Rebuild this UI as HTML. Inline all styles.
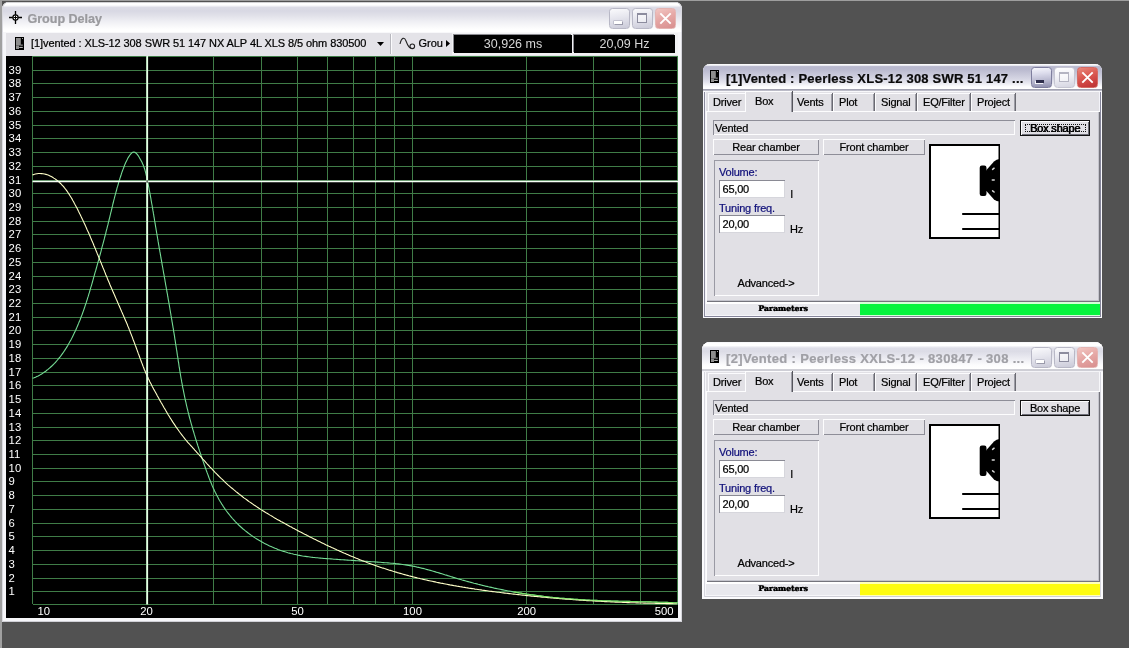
<!DOCTYPE html>
<html lang="en"><head><meta charset="utf-8">
<title>Group Delay</title>
<style>
html,body{margin:0;padding:0}
body{width:1129px;height:648px;overflow:hidden;background:#525252;position:relative;
 font-family:"Liberation Sans",Arial,sans-serif;font-size:11px;color:#000}
.abs,.plot,div,span,svg{position:absolute}
.win{background:#e2e1e6;border-radius:7px 7px 0 0}
.t{white-space:nowrap;line-height:1;-webkit-text-stroke:0.22px currentColor}
</style></head><body><div id="root" style="left:0;top:0;width:1129px;height:648px;will-change:transform">
<div style="left:0;top:0;width:1129px;height:1.3px;background:#9e9e9e"></div><div style="left:0;top:0;width:1.5px;height:648px;background:#a0a0a0"></div>
<div class="win" style="left:2px;top:2px;width:680px;height:620px;background:#f6f6f9;box-shadow:inset 1px 0 0 #dcdce2, inset -1px 0 0 #d4d4da, inset 0 -1px 0 #d0d0d6"></div>
<div style="left:2px;top:2px;width:680px;height:30px;border-radius:7px 7px 0 0;background:linear-gradient(#b4b4b8 0,#ffffff 1.2px,#ffffff 3px,#dcdce6 5.5px,#d8d8e3 9px,#e2e2ea 14px,#eeeef3 19px,#f8f8fa 24px,#ffffff 28px);box-shadow:inset 1px 0 0 #d8d8de, inset -1px 0 0 #d8d8de"></div>
<svg style="left:8px;top:10px" width="16" height="16" viewBox="0 0 16 16"><path d="M7.5,1 V14 M1,7.5 H14" stroke="#000" stroke-width="1.3" fill="none"/><circle cx="7.5" cy="7.5" r="2.6" stroke="#000" stroke-width="1.2" fill="#fff"/><path d="M7.5,5.5 V9.5 M5.5,7.5 H9.5" stroke="#000" stroke-width="1" fill="none"/></svg>
<div class="t" style="left:27.5px;top:13.4px;font-size:12.6px;font-weight:bold;color:#9a9a9e;letter-spacing:-0.05px">Group Delay</div>
<div style="left:609px;top:8px;width:19px;height:19px;border:1px solid #b8b8c6;border-radius:3.5px;background:linear-gradient(170deg,#fafafc 0,#e6e6ee 45%,#cacad8 100%)"><div style="left:3.5px;top:11.5px;width:8px;height:3px;background:#fff;box-shadow:1px 1px 0 #9a9aaa, 0 0 0 0.5px #a6a6b6"></div></div>
<div style="left:632px;top:8px;width:19px;height:19px;border:1px solid #b8b8c6;border-radius:3.5px;background:linear-gradient(170deg,#fafafc 0,#e6e6ee 45%,#cacad8 100%)"><div style="left:4px;top:4px;width:8px;height:7px;border:1px solid #8c8c9e;border-top-width:2px;background:rgba(255,255,255,.5)"></div></div>
<div style="left:655px;top:8px;width:19px;height:19px;border:1px solid #e4b4b2;border-radius:3.5px;background:linear-gradient(160deg,#f2c6c2 0,#e6a8a6 45%,#d88e8e 100%)"><svg style="left:3px;top:3px" width="13" height="13" viewBox="0 0 13 13"><path d="M1.3,1.3 L11.7,11.7 M11.7,1.3 L1.3,11.7" stroke="#fff" stroke-width="1.9" fill="none"/></svg></div>
<div style="left:6px;top:32px;width:672px;height:24px;background:#e4e3e8;box-shadow:inset 0 1px 0 #f8f8fa"></div>
<svg style="left:15px;top:37px" width="9" height="13" viewBox="0 0 9 13"><rect x="0" y="0" width="9" height="13" fill="#000"/><rect x="1" y="1" width="4.8" height="7.6" fill="#8e8e8e"/><rect x="1" y="8.6" width="3" height="3.4" fill="#8e8e8e"/><rect x="5.8" y="7.7" width="2" height="0.8" fill="#d8d8d8"/><rect x="4.2" y="9.9" width="3.6" height="0.9" fill="#e4e4e4"/><rect x="7" y="1" width="0.9" height="0.9" fill="#d0d0d0"/></svg>
<div class="t" style="left:31px;top:38px;font-size:11px;letter-spacing:-0.085px">[1]vented : XLS-12 308 SWR 51 147 NX ALP 4L XLS 8/5 ohm 830500</div>
<svg style="left:377px;top:42px" width="7" height="4"><path d="M0,0 H7 L3.5,4 Z" fill="#000"/></svg>
<div style="left:390px;top:34px;width:1px;height:20px;background:#b8b8be"></div>
<div style="left:391px;top:34px;width:1px;height:20px;background:#fbfbfd"></div>
<svg style="left:399px;top:36px" width="19" height="16" viewBox="0 0 19 16"><path d="M1,8 C2.5,1 5.5,1 7,5 C8.5,9 9.5,12 12,12" stroke="#222" stroke-width="1.1" fill="none"/><circle cx="13.3" cy="10.3" r="2.3" stroke="#222" stroke-width="1.1" fill="none"/></svg>
<div class="t" style="left:418.5px;top:38px;font-size:11px">Grou</div>
<svg style="left:446px;top:40px" width="4" height="7"><path d="M0,0 V7 L4,3.5 Z" fill="#000"/></svg>
<div style="left:452px;top:33px;width:226px;height:22px;background:#f2f2f4"></div>
<div style="left:454px;top:35px;width:118px;height:18px;background:#000;box-shadow:-1px -1px 0 #8a8a90"></div>
<div style="left:574px;top:35px;width:101px;height:18px;background:#000;box-shadow:-1px -1px 0 #8a8a90"></div>
<div class="t" style="left:454px;top:38.3px;width:118px;text-align:center;font-size:12.5px;color:#d6d6d6;-webkit-text-stroke:0">30,926 ms</div>
<div class="t" style="left:574px;top:38.3px;width:101px;text-align:center;font-size:12.5px;color:#d6d6d6;-webkit-text-stroke:0">20,09 Hz</div>
<svg class="plot" style="left:6px;top:56px" width="672" height="562" viewBox="6 56 672 562">
<rect x="6" y="56" width="672" height="562" fill="#000"/>
<path d="M32.5,604.5 H678 M32.5,591.5 H678 M32.5,578.5 H678 M32.5,564.5 H678 M32.5,550.5 H678 M32.5,536.5 H678 M32.5,523.5 H678 M32.5,509.5 H678 M32.5,495.5 H678 M32.5,481.5 H678 M32.5,468.5 H678 M32.5,454.5 H678 M32.5,440.5 H678 M32.5,427.5 H678 M32.5,413.5 H678 M32.5,399.5 H678 M32.5,385.5 H678 M32.5,372.5 H678 M32.5,358.5 H678 M32.5,344.5 H678 M32.5,330.5 H678 M32.5,317.5 H678 M32.5,303.5 H678 M32.5,289.5 H678 M32.5,276.5 H678 M32.5,262.5 H678 M32.5,248.5 H678 M32.5,234.5 H678 M32.5,221.5 H678 M32.5,207.5 H678 M32.5,193.5 H678 M32.5,180.5 H678 M32.5,166.5 H678 M32.5,152.5 H678 M32.5,138.5 H678 M32.5,125.5 H678 M32.5,111.5 H678 M32.5,97.5 H678 M32.5,83.5 H678 M32.5,70.5 H678 M32.5,56.5 H678 M32.5,56 V604.4 M146.5,56 V604.4 M213.5,56 V604.4 M261.5,56 V604.4 M297.5,56 V604.4 M327.5,56 V604.4 M353.5,56 V604.4 M375.5,56 V604.4 M394.5,56 V604.4 M412.5,56 V604.4 M526.5,56 V604.4 M593.5,56 V604.4 M640.5,56 V604.4 M677.5,56 V604.4" stroke="#3f7c47" stroke-width="1" fill="none" shape-rendering="crispEdges"/>
<path d="M32.5,378.3 L34.1,377.8 L35.5,377.2 L36.8,376.5 L38.2,375.9 L39.5,375.2 L40.8,374.4 L42.0,373.7 L43.3,372.9 L44.5,372.0 L45.7,371.2 L46.8,370.3 L48.0,369.4 L49.1,368.4 L50.2,367.5 L51.3,366.5 L52.4,365.5 L53.5,364.4 L54.5,363.4 L55.5,362.3 L56.5,361.2 L57.5,360.0 L58.4,358.9 L59.4,357.7 L60.3,356.6 L61.2,355.4 L62.1,354.1 L63.0,352.9 L63.8,351.7 L64.7,350.4 L65.5,349.1 L66.3,347.9 L67.1,346.6 L67.9,345.3 L68.6,343.9 L69.4,342.6 L70.1,341.3 L70.9,339.9 L71.6,338.6 L72.3,337.2 L72.9,335.9 L73.6,334.5 L74.3,333.1 L74.9,331.7 L75.6,330.4 L76.2,329.0 L76.8,327.6 L77.4,326.2 L78.0,324.8 L78.6,323.4 L79.1,322.0 L79.7,320.7 L80.3,319.3 L80.8,317.9 L81.3,316.5 L81.9,315.1 L82.4,313.7 L82.9,312.3 L83.4,310.9 L83.9,309.5 L84.4,308.0 L84.9,306.6 L85.3,305.2 L85.8,303.8 L86.3,302.4 L86.7,301.0 L87.2,299.6 L87.6,298.2 L88.1,296.7 L88.5,295.3 L88.9,293.9 L89.4,292.5 L89.8,291.0 L90.2,289.6 L90.6,288.2 L91.0,286.8 L91.5,285.3 L91.9,283.9 L92.3,282.5 L92.7,281.0 L93.1,279.6 L93.5,278.1 L93.9,276.7 L94.3,275.3 L94.7,273.8 L95.1,272.4 L95.6,270.9 L96.0,269.5 L96.4,268.0 L96.8,266.6 L97.2,265.1 L97.6,263.7 L98.0,262.2 L98.4,260.8 L98.8,259.3 L99.2,257.9 L99.6,256.4 L100.0,255.0 L100.4,253.5 L100.8,252.1 L101.2,250.6 L101.5,249.2 L101.9,247.7 L102.3,246.2 L102.7,244.8 L103.1,243.3 L103.5,241.9 L103.9,240.4 L104.3,238.9 L104.6,237.5 L105.0,236.0 L105.4,234.6 L105.8,233.1 L106.1,231.6 L106.5,230.2 L106.9,228.7 L107.2,227.3 L107.6,225.8 L108.0,224.4 L108.3,222.9 L108.7,221.4 L109.1,220.0 L109.4,218.5 L109.8,217.1 L110.1,215.6 L110.5,214.2 L110.8,212.7 L111.2,211.3 L111.5,209.8 L111.9,208.3 L112.2,206.9 L112.6,205.4 L112.9,204.0 L113.3,202.5 L113.6,201.1 L114.0,199.7 L114.4,198.2 L114.7,196.8 L115.1,195.3 L115.5,193.9 L115.9,192.4 L116.3,191.0 L116.7,189.6 L117.0,188.1 L117.5,186.7 L117.9,185.3 L118.3,183.8 L118.7,182.4 L119.1,181.0 L119.6,179.6 L120.0,178.1 L120.5,176.7 L121.0,175.3 L121.4,173.9 L121.9,172.4 L122.4,171.0 L122.9,169.6 L123.5,168.2 L124.0,166.8 L124.5,165.4 L125.1,164.0 L125.7,162.6 L126.4,161.2 L127.1,159.8 L127.8,158.3 L128.7,156.9 L129.6,155.5 L130.6,154.2 L131.6,153.1 L132.7,152.3 L133.8,152.0 L134.9,152.2 L135.9,153.0 L137.0,154.1 L138.0,155.4 L138.9,156.8 L139.7,158.2 L140.5,159.6 L141.3,160.9 L142.0,162.3 L142.6,163.7 L143.2,165.0 L143.7,166.4 L144.2,167.8 L144.7,169.2 L145.1,170.7 L145.5,172.1 L145.9,173.6 L146.2,175.0 L146.6,176.5 L146.9,178.0 L147.2,179.4 L147.5,180.9 L147.8,182.4 L148.1,183.9 L148.4,185.3 L148.7,186.8 L149.0,188.3 L149.2,189.8 L149.5,191.2 L149.8,192.7 L150.1,194.2 L150.3,195.7 L150.6,197.1 L150.9,198.6 L151.1,200.1 L151.4,201.6 L151.6,203.0 L151.9,204.5 L152.2,206.0 L152.4,207.5 L152.7,208.9 L152.9,210.4 L153.2,211.9 L153.4,213.4 L153.7,214.8 L153.9,216.3 L154.2,217.8 L154.4,219.3 L154.6,220.7 L154.9,222.2 L155.1,223.7 L155.4,225.2 L155.6,226.6 L155.9,228.1 L156.1,229.6 L156.4,231.1 L156.6,232.5 L156.9,234.0 L157.1,235.5 L157.4,237.0 L157.6,238.4 L157.9,239.9 L158.1,241.4 L158.4,242.9 L158.6,244.3 L158.9,245.8 L159.1,247.3 L159.4,248.8 L159.7,250.3 L159.9,251.7 L160.2,253.2 L160.4,254.7 L160.7,256.2 L160.9,257.7 L161.2,259.1 L161.5,260.6 L161.7,262.1 L162.0,263.6 L162.2,265.1 L162.5,266.5 L162.8,268.0 L163.0,269.5 L163.3,271.0 L163.5,272.5 L163.8,273.9 L164.1,275.4 L164.3,276.9 L164.6,278.4 L164.9,279.9 L165.1,281.3 L165.4,282.8 L165.6,284.3 L165.9,285.8 L166.2,287.3 L166.4,288.7 L166.7,290.2 L166.9,291.7 L167.2,293.2 L167.5,294.7 L167.7,296.2 L168.0,297.6 L168.2,299.1 L168.5,300.6 L168.8,302.1 L169.0,303.6 L169.3,305.0 L169.5,306.5 L169.8,308.0 L170.0,309.5 L170.3,311.0 L170.5,312.5 L170.8,313.9 L171.0,315.4 L171.3,316.9 L171.5,318.4 L171.8,319.9 L172.0,321.3 L172.3,322.8 L172.5,324.3 L172.8,325.8 L173.0,327.3 L173.3,328.7 L173.5,330.2 L173.7,331.7 L174.0,333.2 L174.2,334.7 L174.5,336.1 L174.7,337.6 L174.9,339.1 L175.2,340.6 L175.4,342.1 L175.6,343.5 L175.8,345.0 L176.1,346.5 L176.3,348.0 L176.5,349.4 L176.8,350.9 L177.0,352.4 L177.2,353.9 L177.4,355.4 L177.7,356.8 L177.9,358.3 L178.1,359.8 L178.3,361.3 L178.6,362.7 L178.8,364.2 L179.0,365.7 L179.2,367.2 L179.5,368.6 L179.7,370.1 L180.0,371.6 L180.2,373.1 L180.4,374.5 L180.7,376.0 L180.9,377.5 L181.2,379.0 L181.5,380.4 L181.7,381.9 L182.0,383.4 L182.3,384.8 L182.5,386.3 L182.8,387.8 L183.1,389.2 L183.4,390.7 L183.7,392.2 L184.0,393.6 L184.3,395.1 L184.6,396.6 L184.9,398.0 L185.2,399.5 L185.5,401.0 L185.9,402.4 L186.2,403.9 L186.5,405.3 L186.9,406.8 L187.2,408.3 L187.6,409.7 L187.9,411.2 L188.3,412.6 L188.7,414.1 L189.0,415.5 L189.4,417.0 L189.8,418.5 L190.2,419.9 L190.6,421.4 L191.0,422.8 L191.4,424.3 L191.8,425.7 L192.2,427.2 L192.6,428.6 L193.0,430.1 L193.5,431.5 L193.9,432.9 L194.3,434.4 L194.8,435.8 L195.2,437.3 L195.6,438.7 L196.1,440.2 L196.5,441.6 L197.0,443.0 L197.5,444.5 L197.9,445.9 L198.4,447.3 L198.9,448.8 L199.3,450.2 L199.8,451.6 L200.3,453.1 L200.8,454.5 L201.2,455.9 L201.7,457.3 L202.2,458.8 L202.7,460.2 L203.2,461.6 L203.7,463.0 L204.2,464.5 L204.7,465.9 L205.2,467.3 L205.7,468.7 L206.2,470.1 L206.7,471.5 L207.2,472.9 L207.8,474.4 L208.3,475.8 L208.8,477.2 L209.3,478.6 L209.9,480.0 L210.4,481.3 L211.0,482.7 L211.6,484.1 L212.1,485.5 L212.7,486.9 L213.3,488.2 L214.0,489.6 L214.6,491.0 L215.2,492.3 L215.9,493.6 L216.6,495.0 L217.3,496.3 L218.0,497.6 L218.7,498.9 L219.4,500.2 L220.2,501.5 L221.0,502.8 L221.8,504.1 L222.6,505.3 L223.4,506.6 L224.2,507.8 L225.1,509.1 L225.9,510.3 L226.8,511.5 L227.7,512.7 L228.7,513.9 L229.6,515.0 L230.5,516.2 L231.5,517.3 L232.5,518.5 L233.5,519.6 L234.5,520.7 L235.5,521.8 L236.6,522.9 L237.6,523.9 L238.7,525.0 L239.8,526.0 L240.9,527.0 L242.0,528.0 L243.1,529.0 L244.3,529.9 L245.4,530.9 L246.6,531.8 L247.8,532.7 L249.0,533.6 L250.2,534.5 L251.4,535.4 L252.6,536.2 L253.9,537.1 L255.1,537.9 L256.4,538.7 L257.7,539.5 L259.0,540.3 L260.3,541.0 L261.6,541.8 L262.9,542.5 L264.2,543.2 L265.6,543.9 L266.9,544.6 L268.2,545.2 L269.6,545.9 L271.0,546.5 L272.3,547.1 L273.7,547.7 L275.1,548.3 L276.5,548.8 L277.9,549.4 L279.3,549.9 L280.7,550.4 L282.2,550.9 L283.6,551.4 L285.0,551.8 L286.5,552.2 L287.9,552.7 L289.4,553.1 L290.8,553.5 L292.3,553.8 L293.7,554.2 L295.2,554.5 L296.6,554.8 L298.1,555.2 L299.6,555.4 L301.1,555.7 L302.5,556.0 L304.0,556.2 L305.5,556.4 L307.0,556.6 L308.5,556.8 L309.9,557.0 L311.4,557.2 L312.9,557.4 L314.4,557.5 L315.9,557.7 L317.4,557.8 L318.9,558.0 L320.4,558.1 L321.9,558.2 L323.4,558.4 L324.9,558.5 L326.4,558.6 L327.9,558.7 L329.4,558.8 L330.9,558.9 L332.4,559.0 L333.9,559.2 L335.4,559.3 L337.0,559.4 L338.5,559.5 L340.0,559.6 L341.5,559.7 L343.0,559.8 L344.5,559.9 L346.0,560.0 L347.5,560.1 L349.0,560.2 L350.5,560.3 L352.0,560.4 L353.6,560.5 L355.1,560.6 L356.6,560.7 L358.1,560.8 L359.6,560.9 L361.1,561.0 L362.6,561.1 L364.1,561.2 L365.6,561.3 L367.1,561.4 L368.6,561.5 L370.1,561.6 L371.6,561.7 L373.1,561.8 L374.6,561.9 L376.1,562.0 L377.5,562.1 L379.0,562.2 L380.5,562.3 L382.0,562.5 L383.5,562.6 L385.0,562.7 L386.4,562.8 L387.9,562.9 L389.4,563.0 L390.9,563.2 L392.3,563.3 L393.8,563.4 L395.3,563.6 L396.7,563.8 L398.2,563.9 L399.7,564.1 L401.1,564.3 L402.6,564.5 L404.1,564.7 L405.5,564.9 L407.0,565.1 L408.5,565.4 L409.9,565.6 L411.4,565.9 L412.8,566.2 L414.3,566.4 L415.7,566.7 L417.2,567.1 L418.6,567.4 L420.1,567.7 L421.6,568.1 L423.0,568.4 L424.5,568.8 L425.9,569.2 L427.4,569.6 L428.8,570.0 L430.3,570.4 L431.7,570.8 L433.2,571.2 L434.6,571.6 L436.1,572.1 L437.5,572.5 L439.0,572.9 L440.4,573.4 L441.9,573.8 L443.3,574.2 L444.8,574.7 L446.2,575.1 L447.7,575.6 L449.1,576.0 L450.6,576.5 L452.0,576.9 L453.5,577.4 L454.9,577.8 L456.4,578.2 L457.8,578.7 L459.3,579.1 L460.7,579.5 L462.2,580.0 L463.6,580.4 L465.1,580.8 L466.6,581.2 L468.0,581.6 L469.5,582.0 L470.9,582.4 L472.4,582.8 L473.8,583.2 L475.3,583.5 L476.8,583.9 L478.2,584.3 L479.7,584.6 L481.1,585.0 L482.6,585.4 L484.1,585.7 L485.5,586.1 L487.0,586.4 L488.5,586.8 L489.9,587.1 L491.4,587.4 L492.9,587.7 L494.3,588.1 L495.8,588.4 L497.3,588.7 L498.7,589.0 L500.2,589.3 L501.7,589.6 L503.1,589.9 L504.6,590.2 L506.1,590.5 L507.6,590.8 L509.0,591.0 L510.5,591.3 L512.0,591.6 L513.4,591.9 L514.9,592.1 L516.4,592.4 L517.9,592.6 L519.3,592.9 L520.8,593.1 L522.3,593.4 L523.8,593.6 L525.3,593.8 L526.7,594.1 L528.2,594.3 L529.7,594.5 L531.2,594.7 L532.6,594.9 L534.1,595.1 L535.6,595.3 L537.1,595.5 L538.6,595.7 L540.1,595.9 L541.5,596.1 L543.0,596.3 L544.5,596.5 L546.0,596.6 L547.5,596.8 L549.0,597.0 L550.4,597.2 L551.9,597.3 L553.4,597.5 L554.9,597.6 L556.4,597.8 L557.9,597.9 L559.4,598.1 L560.8,598.2 L562.3,598.3 L563.8,598.4 L565.3,598.6 L566.8,598.7 L568.3,598.8 L569.8,598.9 L571.3,599.0 L572.8,599.1 L574.2,599.2 L575.7,599.3 L577.2,599.4 L578.7,599.5 L580.2,599.6 L581.7,599.7 L583.2,599.8 L584.7,599.9 L586.2,600.0 L587.7,600.0 L589.2,600.1 L590.7,600.2 L592.2,600.3 L593.7,600.3 L595.2,600.4 L596.7,600.4 L598.2,600.5 L599.6,600.6 L601.1,600.6 L602.6,600.7 L604.1,600.7 L605.6,600.8 L607.1,600.8 L608.6,600.9 L610.1,600.9 L611.6,601.0 L613.1,601.0 L614.6,601.1 L616.1,601.1 L617.6,601.1 L619.1,601.2 L620.6,601.2 L622.1,601.3 L623.6,601.3 L625.1,601.3 L626.6,601.4 L628.1,601.4 L629.6,601.4 L631.1,601.5 L632.6,601.5 L634.1,601.5 L635.7,601.6 L637.2,601.6 L638.7,601.7 L640.2,601.7 L641.7,601.7 L643.2,601.8 L644.7,601.8 L646.2,601.8 L647.7,601.9 L649.2,601.9 L650.7,601.9 L652.2,602.0 L653.7,602.0 L655.2,602.1 L656.7,602.1 L658.2,602.2 L659.7,602.2 L661.2,602.2 L662.7,602.3 L664.3,602.3 L665.8,602.4 L667.3,602.4 L668.8,602.5 L670.3,602.5 L671.8,602.6 L673.3,602.7 L674.8,602.7 L676.3,602.8 L677.8,602.9" stroke="#74da94" stroke-width="1.1" fill="none"/>
<path d="M32.5,175.1 L33.8,174.4 L35.4,174.0 L37.0,173.7 L38.5,173.5 L40.0,173.5 L41.5,173.6 L43.0,173.7 L44.5,174.0 L45.9,174.4 L47.3,174.8 L48.7,175.3 L50.0,175.9 L51.3,176.6 L52.6,177.3 L53.8,178.1 L55.1,178.9 L56.2,179.7 L57.4,180.6 L58.5,181.5 L59.5,182.5 L60.6,183.5 L61.6,184.6 L62.6,185.6 L63.6,186.7 L64.5,187.9 L65.4,189.0 L66.3,190.2 L67.2,191.4 L68.1,192.7 L68.9,193.9 L69.7,195.2 L70.5,196.5 L71.3,197.8 L72.1,199.1 L72.8,200.5 L73.6,201.8 L74.3,203.2 L75.0,204.5 L75.8,205.9 L76.5,207.2 L77.2,208.6 L77.9,210.0 L78.5,211.3 L79.2,212.7 L79.9,214.1 L80.6,215.4 L81.2,216.8 L81.9,218.2 L82.5,219.5 L83.2,220.9 L83.8,222.3 L84.5,223.7 L85.1,225.0 L85.7,226.4 L86.3,227.8 L86.9,229.2 L87.5,230.5 L88.2,231.9 L88.8,233.3 L89.4,234.7 L90.0,236.0 L90.5,237.4 L91.1,238.8 L91.7,240.2 L92.3,241.5 L92.9,242.9 L93.5,244.3 L94.0,245.7 L94.6,247.1 L95.2,248.4 L95.7,249.8 L96.3,251.2 L96.9,252.6 L97.4,254.0 L98.0,255.3 L98.6,256.7 L99.1,258.1 L99.7,259.5 L100.2,260.9 L100.8,262.2 L101.4,263.6 L101.9,265.0 L102.5,266.4 L103.0,267.8 L103.6,269.1 L104.2,270.5 L104.7,271.9 L105.3,273.3 L105.8,274.7 L106.4,276.0 L107.0,277.4 L107.5,278.8 L108.1,280.2 L108.7,281.6 L109.3,282.9 L109.8,284.3 L110.4,285.7 L111.0,287.1 L111.6,288.4 L112.2,289.8 L112.8,291.2 L113.4,292.6 L114.0,293.9 L114.6,295.3 L115.2,296.7 L115.8,298.1 L116.4,299.5 L117.0,300.8 L117.6,302.2 L118.2,303.6 L118.8,305.0 L119.4,306.3 L120.0,307.7 L120.6,309.1 L121.2,310.5 L121.8,311.9 L122.4,313.2 L123.0,314.6 L123.6,316.0 L124.2,317.4 L124.8,318.8 L125.4,320.2 L126.0,321.6 L126.6,322.9 L127.2,324.3 L127.7,325.7 L128.3,327.1 L128.9,328.5 L129.4,329.9 L130.0,331.3 L130.5,332.7 L131.1,334.1 L131.6,335.5 L132.2,336.9 L132.7,338.4 L133.2,339.8 L133.8,341.2 L134.3,342.6 L134.8,344.0 L135.3,345.4 L135.9,346.8 L136.4,348.2 L136.9,349.6 L137.4,351.0 L137.9,352.4 L138.4,353.9 L139.0,355.3 L139.5,356.7 L140.0,358.1 L140.5,359.5 L141.0,360.8 L141.5,362.2 L142.1,363.6 L142.6,365.0 L143.1,366.4 L143.7,367.8 L144.2,369.2 L144.8,370.5 L145.4,371.9 L145.9,373.3 L146.5,374.6 L147.2,376.0 L147.8,377.3 L148.4,378.7 L149.1,380.0 L149.7,381.4 L150.4,382.7 L151.1,384.0 L151.8,385.4 L152.4,386.7 L153.1,388.0 L153.8,389.4 L154.6,390.7 L155.3,392.0 L156.0,393.3 L156.7,394.6 L157.4,395.9 L158.2,397.3 L158.9,398.6 L159.6,399.9 L160.4,401.2 L161.1,402.5 L161.9,403.8 L162.6,405.1 L163.4,406.4 L164.1,407.7 L164.9,409.0 L165.6,410.3 L166.4,411.6 L167.2,412.9 L167.9,414.2 L168.7,415.5 L169.5,416.8 L170.3,418.1 L171.1,419.3 L171.9,420.6 L172.7,421.9 L173.5,423.1 L174.4,424.4 L175.2,425.6 L176.0,426.9 L176.9,428.1 L177.8,429.3 L178.6,430.5 L179.5,431.8 L180.4,433.0 L181.3,434.2 L182.2,435.3 L183.1,436.5 L184.0,437.7 L184.9,438.8 L185.9,440.0 L186.8,441.1 L187.8,442.3 L188.8,443.4 L189.8,444.5 L190.8,445.6 L191.8,446.7 L192.8,447.8 L193.8,448.9 L194.8,450.1 L195.8,451.2 L196.8,452.3 L197.8,453.4 L198.8,454.5 L199.8,455.6 L200.8,456.7 L201.8,457.8 L202.8,459.0 L203.8,460.1 L204.8,461.2 L205.8,462.3 L206.8,463.5 L207.8,464.6 L208.8,465.7 L209.8,466.8 L210.9,467.9 L211.9,469.0 L212.9,470.1 L214.0,471.2 L215.0,472.3 L216.1,473.4 L217.1,474.4 L218.2,475.5 L219.3,476.6 L220.3,477.6 L221.4,478.7 L222.5,479.7 L223.6,480.7 L224.7,481.8 L225.8,482.8 L226.9,483.8 L228.0,484.8 L229.2,485.8 L230.3,486.8 L231.4,487.8 L232.6,488.7 L233.7,489.7 L234.9,490.7 L236.0,491.6 L237.2,492.5 L238.4,493.5 L239.5,494.4 L240.7,495.3 L241.9,496.2 L243.1,497.2 L244.3,498.1 L245.5,498.9 L246.7,499.8 L247.9,500.7 L249.1,501.6 L250.3,502.4 L251.6,503.3 L252.8,504.1 L254.0,505.0 L255.3,505.8 L256.5,506.6 L257.8,507.5 L259.0,508.3 L260.3,509.1 L261.5,509.9 L262.8,510.7 L264.1,511.5 L265.3,512.3 L266.6,513.1 L267.9,513.8 L269.2,514.6 L270.4,515.4 L271.7,516.1 L273.0,516.9 L274.3,517.7 L275.6,518.4 L276.9,519.2 L278.2,519.9 L279.5,520.6 L280.8,521.4 L282.1,522.1 L283.4,522.8 L284.8,523.6 L286.1,524.3 L287.4,525.0 L288.7,525.7 L290.0,526.4 L291.4,527.1 L292.7,527.9 L294.0,528.6 L295.3,529.3 L296.7,530.0 L298.0,530.7 L299.3,531.4 L300.6,532.1 L302.0,532.8 L303.3,533.5 L304.7,534.2 L306.0,534.8 L307.3,535.5 L308.7,536.2 L310.0,536.9 L311.3,537.6 L312.7,538.3 L314.0,538.9 L315.4,539.6 L316.7,540.3 L318.1,540.9 L319.4,541.6 L320.8,542.3 L322.1,542.9 L323.5,543.6 L324.8,544.2 L326.2,544.9 L327.5,545.5 L328.9,546.2 L330.3,546.8 L331.6,547.5 L333.0,548.1 L334.4,548.7 L335.7,549.3 L337.1,550.0 L338.5,550.6 L339.8,551.2 L341.2,551.8 L342.6,552.4 L343.9,553.0 L345.3,553.6 L346.7,554.2 L348.1,554.8 L349.5,555.4 L350.8,556.0 L352.2,556.6 L353.6,557.1 L355.0,557.7 L356.4,558.3 L357.8,558.8 L359.2,559.4 L360.6,560.0 L361.9,560.5 L363.3,561.0 L364.7,561.6 L366.1,562.1 L367.5,562.7 L368.9,563.2 L370.4,563.7 L371.8,564.2 L373.2,564.7 L374.6,565.2 L376.0,565.7 L377.4,566.2 L378.8,566.7 L380.2,567.2 L381.7,567.7 L383.1,568.1 L384.5,568.6 L385.9,569.0 L387.3,569.5 L388.8,570.0 L390.2,570.4 L391.6,570.8 L393.1,571.3 L394.5,571.7 L395.9,572.1 L397.4,572.6 L398.8,573.0 L400.2,573.4 L401.7,573.8 L403.1,574.2 L404.6,574.6 L406.0,575.0 L407.4,575.4 L408.9,575.8 L410.3,576.1 L411.8,576.5 L413.2,576.9 L414.7,577.2 L416.1,577.6 L417.6,578.0 L419.1,578.3 L420.5,578.7 L422.0,579.0 L423.4,579.4 L424.9,579.7 L426.4,580.0 L427.8,580.4 L429.3,580.7 L430.7,581.0 L432.2,581.3 L433.7,581.6 L435.1,581.9 L436.6,582.3 L438.1,582.6 L439.5,582.9 L441.0,583.2 L442.5,583.4 L444.0,583.7 L445.4,584.0 L446.9,584.3 L448.4,584.6 L449.9,584.9 L451.3,585.1 L452.8,585.4 L454.3,585.7 L455.8,585.9 L457.2,586.2 L458.7,586.4 L460.2,586.7 L461.7,586.9 L463.2,587.2 L464.7,587.4 L466.1,587.7 L467.6,587.9 L469.1,588.2 L470.6,588.4 L472.1,588.6 L473.6,588.8 L475.0,589.1 L476.5,589.3 L478.0,589.5 L479.5,589.7 L481.0,589.9 L482.5,590.2 L484.0,590.4 L485.5,590.6 L487.0,590.8 L488.4,591.0 L489.9,591.2 L491.4,591.4 L492.9,591.6 L494.4,591.8 L495.9,592.0 L497.4,592.2 L498.9,592.3 L500.4,592.5 L501.9,592.7 L503.3,592.9 L504.8,593.1 L506.3,593.3 L507.8,593.4 L509.3,593.6 L510.8,593.8 L512.3,594.0 L513.8,594.1 L515.3,594.3 L516.8,594.5 L518.3,594.6 L519.8,594.8 L521.2,595.0 L522.7,595.1 L524.2,595.3 L525.7,595.4 L527.2,595.6 L528.7,595.8 L530.2,595.9 L531.7,596.1 L533.2,596.2 L534.7,596.4 L536.2,596.5 L537.7,596.6 L539.2,596.8 L540.6,596.9 L542.1,597.1 L543.6,597.2 L545.1,597.3 L546.6,597.5 L548.1,597.6 L549.6,597.7 L551.1,597.9 L552.6,598.0 L554.1,598.1 L555.6,598.3 L557.1,598.4 L558.6,598.5 L560.1,598.6 L561.6,598.7 L563.0,598.9 L564.5,599.0 L566.0,599.1 L567.5,599.2 L569.0,599.3 L570.5,599.4 L572.0,599.5 L573.5,599.7 L575.0,599.8 L576.5,599.9 L578.0,600.0 L579.5,600.1 L581.0,600.2 L582.5,600.3 L584.0,600.4 L585.5,600.5 L587.0,600.6 L588.5,600.6 L589.9,600.7 L591.4,600.8 L592.9,600.9 L594.4,601.0 L595.9,601.1 L597.4,601.2 L598.9,601.3 L600.4,601.3 L601.9,601.4 L603.4,601.5 L604.9,601.6 L606.4,601.6 L607.9,601.7 L609.4,601.8 L610.9,601.9 L612.4,601.9 L613.9,602.0 L615.4,602.1 L616.9,602.1 L618.4,602.2 L619.9,602.3 L621.4,602.3 L622.9,602.4 L624.4,602.4 L625.9,602.5 L627.4,602.6 L628.9,602.6 L630.4,602.7 L631.9,602.7 L633.4,602.8 L634.9,602.8 L636.4,602.9 L637.9,602.9 L639.4,603.0 L640.9,603.0 L642.4,603.0 L643.9,603.1 L645.4,603.1 L646.9,603.2 L648.4,603.2 L649.9,603.2 L651.4,603.3 L652.9,603.3 L654.4,603.3 L655.9,603.4 L657.4,603.4 L658.9,603.4 L660.4,603.5 L661.9,603.5 L663.4,603.5 L664.9,603.5 L666.4,603.6 L667.9,603.6 L669.4,603.6 L670.9,603.6 L672.4,603.6 L673.9,603.7 L675.4,603.7 L676.9,603.7" stroke="#ffffc8" stroke-width="1.1" fill="none"/>
<path d="M513.4,591.9 L514.9,592.1 L516.4,592.4 L517.9,592.6 L519.3,592.9 L520.8,593.1 L522.3,593.4 L523.8,593.6 L525.3,593.8 L526.7,594.1 L528.2,594.3 L529.7,594.5 L531.2,594.7 L532.6,594.9 L534.1,595.1 L535.6,595.3 L537.1,595.5 L538.6,595.7 L540.1,595.9 L541.5,596.1 L543.0,596.3 L544.5,596.5 L546.0,596.6 L547.5,596.8 L549.0,597.0 L550.4,597.2 L551.9,597.3 L553.4,597.5 L554.9,597.6 L556.4,597.8 L557.9,597.9 L559.4,598.1 L560.8,598.2 L562.3,598.3 L563.8,598.4 L565.3,598.6 L566.8,598.7 L568.3,598.8 L569.8,598.9 L571.3,599.0 L572.8,599.1 L574.2,599.2 L575.7,599.3 L577.2,599.4 L578.7,599.5 L580.2,599.6 L581.7,599.7 L583.2,599.8 L584.7,599.9 L586.2,600.0 L587.7,600.0 L589.2,600.1 L590.7,600.2 L592.2,600.3 L593.7,600.3 L595.2,600.4 L596.7,600.4 L598.2,600.5 L599.6,600.6 L601.1,600.6 L602.6,600.7 L604.1,600.7 L605.6,600.8 L607.1,600.8 L608.6,600.9 L610.1,600.9 L611.6,601.0 L613.1,601.0 L614.6,601.1 L616.1,601.1 L617.6,601.1 L619.1,601.2 L620.6,601.2 L622.1,601.3 L623.6,601.3 L625.1,601.3 L626.6,601.4 L628.1,601.4 L629.6,601.4 L631.1,601.5 L632.6,601.5 L634.1,601.5 L635.7,601.6 L637.2,601.6 L638.7,601.7 L640.2,601.7 L641.7,601.7 L643.2,601.8 L644.7,601.8 L646.2,601.8 L647.7,601.9 L649.2,601.9 L650.7,601.9 L652.2,602.0 L653.7,602.0 L655.2,602.1 L656.7,602.1 L658.2,602.2 L659.7,602.2 L661.2,602.2 L662.7,602.3 L664.3,602.3 L665.8,602.4 L667.3,602.4 L668.8,602.5 L670.3,602.5 L671.8,602.6 L673.3,602.7 L674.8,602.7 L676.3,602.8 L677.8,602.9" stroke="#7ee85a" stroke-width="1.1" fill="none" opacity="0.75"/>
<path d="M147.2,56 V604.4" stroke="#e6ffe6" stroke-width="1.8" fill="none"/>
<path d="M32.5,181.5 H678" stroke="#f6fff6" stroke-width="1.5" fill="none"/>
<rect x="146.3" y="180.2" width="1.8" height="2.6" fill="#5d705d"/>
<g font-family="Liberation Sans, Arial, sans-serif" font-size="11.3" fill="#fff">
<text x="8.6" y="594.6">1</text>
<text x="8.6" y="581.6">2</text>
<text x="8.6" y="567.6">3</text>
<text x="8.6" y="553.6">4</text>
<text x="8.6" y="539.6">5</text>
<text x="8.6" y="526.6">6</text>
<text x="8.6" y="512.6">7</text>
<text x="8.6" y="498.6">8</text>
<text x="8.6" y="484.6">9</text>
<text x="8.6" y="471.6">10</text>
<text x="8.6" y="457.6">11</text>
<text x="8.6" y="443.6">12</text>
<text x="8.6" y="430.6">13</text>
<text x="8.6" y="416.6">14</text>
<text x="8.6" y="402.6">15</text>
<text x="8.6" y="388.6">16</text>
<text x="8.6" y="375.6">17</text>
<text x="8.6" y="361.6">18</text>
<text x="8.6" y="347.6">19</text>
<text x="8.6" y="333.6">20</text>
<text x="8.6" y="320.6">21</text>
<text x="8.6" y="306.6">22</text>
<text x="8.6" y="292.6">23</text>
<text x="8.6" y="279.6">24</text>
<text x="8.6" y="265.6">25</text>
<text x="8.6" y="251.6">26</text>
<text x="8.6" y="237.6">27</text>
<text x="8.6" y="224.6">28</text>
<text x="8.6" y="210.6">29</text>
<text x="8.6" y="196.6">30</text>
<text x="8.6" y="183.6">31</text>
<text x="8.6" y="169.6">32</text>
<text x="8.6" y="155.6">33</text>
<text x="8.6" y="141.6">34</text>
<text x="8.6" y="128.6">35</text>
<text x="8.6" y="114.6">36</text>
<text x="8.6" y="100.6">37</text>
<text x="8.6" y="86.6">38</text>
<text x="8.6" y="73.6">39</text>
<text x="37.5" y="615.3">10</text>
<text x="146.6" y="615.3" text-anchor="middle">20</text>
<text x="297.5" y="615.3" text-anchor="middle">50</text>
<text x="412.5" y="615.3" text-anchor="middle">100</text>
<text x="526.6" y="615.3" text-anchor="middle">200</text>
<text x="673.5" y="615.3" text-anchor="end">500</text>
</g>
</svg>
<div style="left:703px;top:64px;width:398px;height:254px">
<div class="win" style="left:0;top:0;width:399px;height:254px;background:#f3f3f9;box-shadow:inset 1px 0 0 #f6f6fa, inset -1px 0 0 #fafafd, inset 0 -1px 0 #fafafd,inset 2px 0 0 #8a8a9c, inset -2px 0 0 #85859a, inset 0 -2px 0 #85859a"></div>
<div style="left:0;top:0;width:399px;height:28px;border-radius:7px 7px 0 0;background:linear-gradient(#f4f4f8 0,#ffffff 1px,#b8b8ce 2.6px,#bbbbd0 6px,#cacadb 11px,#d6d6e4 15px,#e8e8f0 19px,#fbfbfd 22.5px,#ffffff 24.6px,#a2a2b2 25.3px,#a2a2b2 26.3px,#fbfbfd 27px,#f4f4f8 28px)"></div>
<svg style="left:7px;top:6px" width="9" height="13" viewBox="0 0 9 13"><rect x="0" y="0" width="9" height="13" fill="#000"/><rect x="1" y="1" width="4.8" height="7.6" fill="#8e8e8e"/><rect x="1" y="8.6" width="3" height="3.4" fill="#8e8e8e"/><rect x="5.8" y="7.7" width="2" height="0.8" fill="#d8d8d8"/><rect x="4.2" y="9.9" width="3.6" height="0.9" fill="#e4e4e4"/><rect x="7" y="1" width="0.9" height="0.9" fill="#d0d0d0"/></svg>
<div class="t" style="left:23px;top:7.6px;font-size:13px;font-weight:bold;color:#0a0a0a;letter-spacing:0.2px">[1]Vented : Peerless XLS-12 308 SWR 51 147 ...</div>
<div style="left:328px;top:3px;width:19px;height:19px;border:1px solid #7e7e9e;border-radius:3.5px;background:linear-gradient(175deg,#f6f6fc 0,#dcdcec 30%,#b4b4cc 70%,#8e8eae 100%)"><div style="left:3.5px;top:11.5px;width:8px;height:3px;background:#2e2e4c;box-shadow:-1px 1px 0 #f4f4fa"></div></div>
<div style="left:351px;top:3px;width:19px;height:19px;border:1px solid #c6c6d2;border-radius:3.5px;background:linear-gradient(170deg,#ffffff 0,#f0f0f6 45%,#d4d4e0 100%)"><div style="left:4px;top:4px;width:8px;height:7px;border:1px solid #b4b4c2;border-top-width:2px;background:rgba(255,255,255,.5)"></div></div>
<div style="left:374px;top:3px;width:19px;height:19px;border:1px solid #d46a64;border-radius:3.5px;background:linear-gradient(160deg,#e8887c 0,#dc5c54 40%,#c83c3c 80%,#b83434 100%)"><svg style="left:3px;top:3px" width="13" height="13" viewBox="0 0 13 13"><path d="M1.3,1.3 L11.7,11.7 M11.7,1.3 L1.3,11.7" stroke="#fff" stroke-width="1.9" fill="none"/></svg></div>
<div style="left:3px;top:28px;width:393px;height:223px;background:#e1e0e5"></div>
<div style="left:3px;top:47px;width:394px;height:190.5px;background:#e1e0e5;box-shadow:inset 1px 1px 0 #fdfdfe, inset -1px -1px 0 #74747c, inset -2px -2px 0 #c4c4cc"></div>
<div style="left:5px;top:28.6px;width:39px;height:18.4px;background:#e1e0e5;box-shadow:inset 1px 1px 0 #fbfbfd, inset -1px 0 0 #9d9da6, 1px 0 0 #6a6a72"></div><div class="t" style="left:10px;top:33.3px;font-size:11px;letter-spacing:-0.2px">Driver</div>
<div style="left:89px;top:28.6px;width:40px;height:18.4px;background:#e1e0e5;box-shadow:inset 1px 1px 0 #fbfbfd, inset -1px 0 0 #9d9da6, 1px 0 0 #6a6a72"></div><div class="t" style="left:94px;top:33.3px;font-size:11px;letter-spacing:-0.2px">Vents</div>
<div style="left:130px;top:28.6px;width:41px;height:18.4px;background:#e1e0e5;box-shadow:inset 1px 1px 0 #fbfbfd, inset -1px 0 0 #9d9da6, 1px 0 0 #6a6a72"></div><div class="t" style="left:136px;top:33.3px;font-size:11px;letter-spacing:-0.2px">Plot</div>
<div style="left:172px;top:28.6px;width:41px;height:18.4px;background:#e1e0e5;box-shadow:inset 1px 1px 0 #fbfbfd, inset -1px 0 0 #9d9da6, 1px 0 0 #6a6a72"></div><div class="t" style="left:178px;top:33.3px;font-size:11px;letter-spacing:-0.2px">Signal</div>
<div style="left:214px;top:28.6px;width:53px;height:18.4px;background:#e1e0e5;box-shadow:inset 1px 1px 0 #fbfbfd, inset -1px 0 0 #9d9da6, 1px 0 0 #6a6a72"></div><div class="t" style="left:220px;top:33.3px;font-size:11px;letter-spacing:-0.2px">EQ/Filter</div>
<div style="left:268px;top:28.6px;width:43.5px;height:18.4px;background:#e1e0e5;box-shadow:inset 1px 1px 0 #fbfbfd, inset -1px 0 0 #9d9da6, 1px 0 0 #6a6a72"></div><div class="t" style="left:274px;top:33.3px;font-size:11px;letter-spacing:-0.2px">Project</div>
<div style="left:42px;top:26.8px;width:47px;height:21.4px;background:#e1e0e5;box-shadow:inset 1px 1px 0 #fdfdfe, inset -1px 0 0 #9d9da6, 1px 0 0 #55555c"></div>
<div class="t" style="left:52px;top:31.5px;font-size:11px;letter-spacing:-0.2px">Box</div>
<div style="left:10px;top:56px;width:302px;height:15px;background:#e1e0e5;box-shadow:inset 1px 1px 0 #8e8e98, inset -1px -1px 0 #fdfdfe"></div>
<div class="t" style="left:12px;top:58.5px;font-size:11px;letter-spacing:-0.2px">Vented</div>
<div style="left:317px;top:56px;width:70px;height:16px;background:#e1e0e5;box-shadow:inset 0 0 0 1px #111, inset 2px 2px 0 #fdfdfe, inset -2px -2px 0 #6e6e78"></div>
<div style="left:322px;top:59.6px;width:59px;height:6.6px;border:1px dotted #111"></div>
<div class="t" style="left:317px;top:58.5px;width:70px;text-align:center;font-size:11px;text-shadow:0.5px 0 0 #000;letter-spacing:-0.2px">Box shape</div>
<div style="left:10px;top:75px;width:106px;height:16px;background:#e1e0e5;box-shadow:inset 1px 1px 0 #fdfdfe, inset -1px -1px 0 #8e8e98"></div>
<div class="t" style="left:10px;top:78px;width:106px;text-align:center;font-size:11px;letter-spacing:-0.2px">Rear chamber</div>
<div style="left:120px;top:75px;width:102px;height:16px;background:#e1e0e5;box-shadow:inset 1px 1px 0 #fdfdfe, inset -1px -1px 0 #8e8e98"></div>
<div class="t" style="left:120px;top:78px;width:102px;text-align:center;font-size:11px;letter-spacing:-0.2px">Front chamber</div>
<div style="left:11px;top:96px;width:105px;height:136px;background:#e1e0e5;box-shadow:inset 1px 1px 0 #9a9aa4, inset -1px -1px 0 #fdfdfe"></div>
<div class="t" style="left:16px;top:102.5px;font-size:11px;letter-spacing:-0.2px;color:#10107a">Volume:</div>
<div class="t" style="left:16px;top:138.5px;font-size:11px;letter-spacing:-0.2px;color:#10107a">Tuning freq.</div>
<div style="left:16px;top:116px;width:66px;height:18px;background:#fff;box-shadow:inset 1px 1px 0 #8a8a94, inset -1px -1px 0 #d6d6dc"></div>
<div class="t" style="left:19.5px;top:119.5px;font-size:11px;letter-spacing:-0.2px">65,00</div>
<div style="left:16px;top:151px;width:66px;height:18px;background:#fff;box-shadow:inset 1px 1px 0 #8a8a94, inset -1px -1px 0 #d6d6dc"></div>
<div class="t" style="left:19.5px;top:154.5px;font-size:11px;letter-spacing:-0.2px">20,00</div>
<div class="t" style="left:87.5px;top:124.5px;font-size:11px;letter-spacing:-0.2px">l</div>
<div class="t" style="left:87px;top:160px;font-size:11px;letter-spacing:-0.2px">Hz</div>
<div class="t" style="left:34.5px;top:214px;font-size:11px;letter-spacing:-0.2px">Advanced-&gt;</div>
<svg style="left:225.5px;top:79.8px" width="71.5" height="95" viewBox="0 0 71.5 95"><rect x="1" y="1" width="69.5" height="93" fill="#fff" stroke="#000" stroke-width="2"/><path d="M33.2,70 H70 M33.2,85 H70" stroke="#000" stroke-width="2"/><rect x="50.7" y="21.5" width="6.8" height="30.5" rx="2.2" fill="#000"/><path d="M57,26.5 L65,17.5 Q67.5,15 70.5,15 V57.5 Q67.5,57.5 65,55.5 L57,46.5 Z" fill="#000"/><path d="M63.6,25.4 l1.5,-1.2 M63.3,35.9 h1.9 M63.6,46.8 l1.5,1.2" stroke="#d8d8d8" stroke-width="1.5" stroke-linecap="round"/></svg>
<div style="left:3px;top:238px;width:394px;height:14px;background:linear-gradient(#ffffff 0,#ffffff 1.7px,#e8e8ed 1.7px,#e8e8ed 12.8px,#f6f6f9 12.8px)"></div>
<div class="t" style="left:3px;top:241px;width:154px;text-align:center;font-family:'DejaVu Serif','Liberation Serif',serif;font-weight:bold;font-size:7.7px;letter-spacing:0;color:#000;text-shadow:0.4px 0 0 #000">Parameters</div>
<div style="left:157px;top:238px;width:240px;height:14px;background:linear-gradient(#d4ffd8 0,#d4ffd8 1.8px,#06f43e 1.8px,#06f43e 12.7px,#d4ffd8 12.7px)"></div>
</div>
<div style="left:703px;top:344px;width:398px;height:254px">
<div class="win" style="left:-1px;top:-2px;width:401px;height:257px;background:#f7f7fa;border-radius:8px 8px 0 0;box-shadow:inset 2px 0 0 #fbfbfd, inset -2px 0 0 #fbfbfd, inset 0 -2px 0 #fbfbfd,inset 3px 0 0 #d6d6de, inset -3px 0 0 #d6d6de, inset 0 -3px 0 #d0d0d8"></div>
<div style="left:-1px;top:-2px;width:401px;height:30px;border-radius:8px 8px 0 0;background:linear-gradient(#f0f0f3 0,#ffffff 1px,#ffffff 3.5px,#dedee8 6px,#dcdce6 9.5px,#e6e6ee 14px,#f2f2f6 19px,#fcfcfd 23px,#ffffff 27px,#c6c6ce 27.6px,#c6c6ce 28.4px,#f6f6f9 29px,#f2f2f6 30px)"></div>
<svg style="left:7px;top:6px" width="9" height="13" viewBox="0 0 9 13"><rect x="0" y="0" width="9" height="13" fill="#000"/><rect x="1" y="1" width="4.8" height="7.6" fill="#8e8e8e"/><rect x="1" y="8.6" width="3" height="3.4" fill="#8e8e8e"/><rect x="5.8" y="7.7" width="2" height="0.8" fill="#d8d8d8"/><rect x="4.2" y="9.9" width="3.6" height="0.9" fill="#e4e4e4"/><rect x="7" y="1" width="0.9" height="0.9" fill="#d0d0d0"/></svg>
<div class="t" style="left:23px;top:7.6px;font-size:13px;font-weight:bold;color:#a0a0a6;letter-spacing:0.34px">[2]Vented : Peerless XXLS-12 - 830847 - 308 ...</div>
<div style="left:328px;top:3px;width:19px;height:19px;border:1px solid #b8b8c6;border-radius:3.5px;background:linear-gradient(170deg,#fafafc 0,#e6e6ee 45%,#cacad8 100%)"><div style="left:3.5px;top:11.5px;width:8px;height:3px;background:#fff;box-shadow:1px 1px 0 #9a9aaa, 0 0 0 0.5px #a6a6b6"></div></div>
<div style="left:351px;top:3px;width:19px;height:19px;border:1px solid #b8b8c6;border-radius:3.5px;background:linear-gradient(170deg,#fafafc 0,#e6e6ee 45%,#cacad8 100%)"><div style="left:4px;top:4px;width:8px;height:7px;border:1px solid #8c8c9e;border-top-width:2px;background:rgba(255,255,255,.5)"></div></div>
<div style="left:374px;top:3px;width:19px;height:19px;border:1px solid #e4b4b2;border-radius:3.5px;background:linear-gradient(160deg,#f2c6c2 0,#e6a8a6 45%,#d88e8e 100%)"><svg style="left:3px;top:3px" width="13" height="13" viewBox="0 0 13 13"><path d="M1.3,1.3 L11.7,11.7 M11.7,1.3 L1.3,11.7" stroke="#fff" stroke-width="1.9" fill="none"/></svg></div>
<div style="left:3px;top:28px;width:393px;height:223px;background:#e1e0e5"></div>
<div style="left:3px;top:47px;width:394px;height:190.5px;background:#e1e0e5;box-shadow:inset 1px 1px 0 #fdfdfe, inset -1px -1px 0 #74747c, inset -2px -2px 0 #c4c4cc"></div>
<div style="left:5px;top:28.6px;width:39px;height:18.4px;background:#e1e0e5;box-shadow:inset 1px 1px 0 #fbfbfd, inset -1px 0 0 #9d9da6, 1px 0 0 #6a6a72"></div><div class="t" style="left:10px;top:33.3px;font-size:11px;letter-spacing:-0.2px">Driver</div>
<div style="left:89px;top:28.6px;width:40px;height:18.4px;background:#e1e0e5;box-shadow:inset 1px 1px 0 #fbfbfd, inset -1px 0 0 #9d9da6, 1px 0 0 #6a6a72"></div><div class="t" style="left:94px;top:33.3px;font-size:11px;letter-spacing:-0.2px">Vents</div>
<div style="left:130px;top:28.6px;width:41px;height:18.4px;background:#e1e0e5;box-shadow:inset 1px 1px 0 #fbfbfd, inset -1px 0 0 #9d9da6, 1px 0 0 #6a6a72"></div><div class="t" style="left:136px;top:33.3px;font-size:11px;letter-spacing:-0.2px">Plot</div>
<div style="left:172px;top:28.6px;width:41px;height:18.4px;background:#e1e0e5;box-shadow:inset 1px 1px 0 #fbfbfd, inset -1px 0 0 #9d9da6, 1px 0 0 #6a6a72"></div><div class="t" style="left:178px;top:33.3px;font-size:11px;letter-spacing:-0.2px">Signal</div>
<div style="left:214px;top:28.6px;width:53px;height:18.4px;background:#e1e0e5;box-shadow:inset 1px 1px 0 #fbfbfd, inset -1px 0 0 #9d9da6, 1px 0 0 #6a6a72"></div><div class="t" style="left:220px;top:33.3px;font-size:11px;letter-spacing:-0.2px">EQ/Filter</div>
<div style="left:268px;top:28.6px;width:43.5px;height:18.4px;background:#e1e0e5;box-shadow:inset 1px 1px 0 #fbfbfd, inset -1px 0 0 #9d9da6, 1px 0 0 #6a6a72"></div><div class="t" style="left:274px;top:33.3px;font-size:11px;letter-spacing:-0.2px">Project</div>
<div style="left:42px;top:26.8px;width:47px;height:21.4px;background:#e1e0e5;box-shadow:inset 1px 1px 0 #fdfdfe, inset -1px 0 0 #9d9da6, 1px 0 0 #55555c"></div>
<div class="t" style="left:52px;top:31.5px;font-size:11px;letter-spacing:-0.2px">Box</div>
<div style="left:10px;top:56px;width:302px;height:15px;background:#e1e0e5;box-shadow:inset 1px 1px 0 #8e8e98, inset -1px -1px 0 #fdfdfe"></div>
<div class="t" style="left:12px;top:58.5px;font-size:11px;letter-spacing:-0.2px">Vented</div>
<div style="left:317px;top:56px;width:70px;height:16px;background:#e1e0e5;box-shadow:inset 0 0 0 1px #111, inset 2px 2px 0 #fdfdfe, inset -2px -2px 0 #6e6e78"></div>
<div class="t" style="left:317px;top:58.5px;width:70px;text-align:center;font-size:11px;letter-spacing:-0.2px">Box shape</div>
<div style="left:10px;top:75px;width:106px;height:16px;background:#e1e0e5;box-shadow:inset 1px 1px 0 #fdfdfe, inset -1px -1px 0 #8e8e98"></div>
<div class="t" style="left:10px;top:78px;width:106px;text-align:center;font-size:11px;letter-spacing:-0.2px">Rear chamber</div>
<div style="left:120px;top:75px;width:102px;height:16px;background:#e1e0e5;box-shadow:inset 1px 1px 0 #fdfdfe, inset -1px -1px 0 #8e8e98"></div>
<div class="t" style="left:120px;top:78px;width:102px;text-align:center;font-size:11px;letter-spacing:-0.2px">Front chamber</div>
<div style="left:11px;top:96px;width:105px;height:136px;background:#e1e0e5;box-shadow:inset 1px 1px 0 #9a9aa4, inset -1px -1px 0 #fdfdfe"></div>
<div class="t" style="left:16px;top:102.5px;font-size:11px;letter-spacing:-0.2px;color:#10107a">Volume:</div>
<div class="t" style="left:16px;top:138.5px;font-size:11px;letter-spacing:-0.2px;color:#10107a">Tuning freq.</div>
<div style="left:16px;top:116px;width:66px;height:18px;background:#fff;box-shadow:inset 1px 1px 0 #8a8a94, inset -1px -1px 0 #d6d6dc"></div>
<div class="t" style="left:19.5px;top:119.5px;font-size:11px;letter-spacing:-0.2px">65,00</div>
<div style="left:16px;top:151px;width:66px;height:18px;background:#fff;box-shadow:inset 1px 1px 0 #8a8a94, inset -1px -1px 0 #d6d6dc"></div>
<div class="t" style="left:19.5px;top:154.5px;font-size:11px;letter-spacing:-0.2px">20,00</div>
<div class="t" style="left:87.5px;top:124.5px;font-size:11px;letter-spacing:-0.2px">l</div>
<div class="t" style="left:87px;top:160px;font-size:11px;letter-spacing:-0.2px">Hz</div>
<div class="t" style="left:34.5px;top:214px;font-size:11px;letter-spacing:-0.2px">Advanced-&gt;</div>
<svg style="left:225.5px;top:79.8px" width="71.5" height="95" viewBox="0 0 71.5 95"><rect x="1" y="1" width="69.5" height="93" fill="#fff" stroke="#000" stroke-width="2"/><path d="M33.2,70 H70 M33.2,85 H70" stroke="#000" stroke-width="2"/><rect x="50.7" y="21.5" width="6.8" height="30.5" rx="2.2" fill="#000"/><path d="M57,26.5 L65,17.5 Q67.5,15 70.5,15 V57.5 Q67.5,57.5 65,55.5 L57,46.5 Z" fill="#000"/><path d="M63.6,25.4 l1.5,-1.2 M63.3,35.9 h1.9 M63.6,46.8 l1.5,1.2" stroke="#d8d8d8" stroke-width="1.5" stroke-linecap="round"/></svg>
<div style="left:3px;top:238px;width:394px;height:14px;background:linear-gradient(#ffffff 0,#ffffff 1.7px,#e8e8ed 1.7px,#e8e8ed 12.8px,#f6f6f9 12.8px)"></div>
<div class="t" style="left:3px;top:241px;width:154px;text-align:center;font-family:'DejaVu Serif','Liberation Serif',serif;font-weight:bold;font-size:7.7px;letter-spacing:0;color:#000;text-shadow:0.4px 0 0 #000">Parameters</div>
<div style="left:157px;top:238px;width:240px;height:14px;background:linear-gradient(#ffffb8 0,#ffffb8 1.8px,#fdfb10 1.8px,#fdfb10 12.7px,#ffffb8 12.7px)"></div>
</div>
</div></body></html>
